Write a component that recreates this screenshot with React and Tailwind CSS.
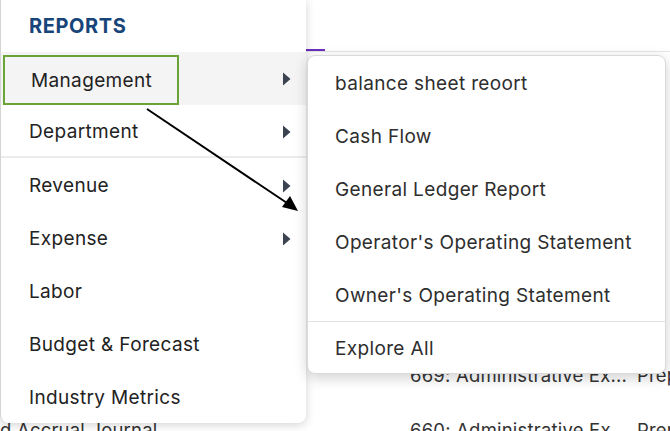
import React from 'react';

const mainItems = [
  { label: 'Management', sub: true, active: true },
  { label: 'Department', sub: true, divider: true },
  { label: 'Revenue', sub: true },
  { label: 'Expense', sub: true },
  { label: 'Labor' },
  { label: 'Budget & Forecast' },
  { label: 'Industry Metrics' },
];

const subItems = [
  'balance sheet reoort',
  'Cash Flow',
  'General Ledger Report',
  "Operator's Operating Statement",
  "Owner's Operating Statement",
];

function Caret() {
  return (
    <svg width="9" height="14" viewBox="0 0 9 14" className="shrink-0">
      <path d="M1 0.5 L8.5 7 L1 13.5 Z" fill="#3b4350" />
    </svg>
  );
}

function App() {
  return (
    <div
      className="relative w-[670px] h-[431px] overflow-hidden bg-white text-[#222] tracking-[0.35px]"
      style={{ fontFamily: 'Inter, "Noto Sans", sans-serif' }}
    >
      {/* page behind the menu */}
      <div className="flex flex-col text-[18.5px] tracking-[0.2px] text-[#333] whitespace-nowrap">
        <div className="h-[52px] flex items-end pl-[305px] border-b border-[#e5e5e5]">
          <div className="w-[20px] h-[2px] bg-[#6b2fbf]" />
        </div>
        <div className="h-[296px]" />
        <div className="h-[52px] flex items-end pb-[10px] pl-[410px]">
          <span className="w-[227px] shrink-0">669: Administrative Ex...</span>
          <span className="shrink-0">Prep</span>
        </div>
        <div className="h-[52px] flex items-start pt-[17px]">
          <span className="w-[410px] shrink-0">d Accrual Journal</span>
          <span className="w-[227px] shrink-0">660: Administrative Ex...</span>
          <span className="shrink-0">Prep</span>
        </div>
      </div>

      {/* left menu */}
      <div className="absolute left-0 top-0 w-[306px] h-[423px] bg-white border-l border-[#d4d4d4] rounded-b-[8px] shadow-[0_2px_10px_rgba(0,0,0,0.18)] flex flex-col">
        <div className="h-[52px] flex items-center pl-[28px] text-[20px] font-bold text-[#17457a] tracking-[0.6px]">
          REPORTS
        </div>
        {mainItems.map((item) => (
          <div
            key={item.label}
            className={`flex items-center h-[53px] shrink-0 pr-[15px] ${item.active ? 'bg-[#f4f4f4]' : 'pt-[3px]'} ${item.divider ? 'border-b-2 border-[#ececec]' : ''}`}
          >
            <div
              className={`flex items-center ${item.active ? 'ml-[2px] mt-[3px] w-[176px] h-[50px] pl-[26px] pt-[2px] border-2 border-[#6aa336]' : 'h-full pl-[28px]'}`}
            >
              <span className="text-[19px]">{item.label}</span>
            </div>
            <div className="flex-1" />
            {item.sub && <Caret />}
          </div>
        ))}
      </div>

      {/* submenu */}
      <div className="absolute left-[307px] top-[55px] w-[359px] bg-white border border-[#dadada] rounded-[8px] shadow-[0_4px_14px_rgba(0,0,0,0.18)] flex flex-col">
        {subItems.map((s) => (
          <div key={s} className="h-[53px] flex items-center pl-[27px] pt-[3px] text-[19px] text-[#2e2e2e] whitespace-nowrap">
            {s}
          </div>
        ))}
        <div className="h-[52px] flex items-center pl-[27px] pt-[3px] text-[19px] text-[#2e2e2e] border-t border-[#e3e3e3]">
          Explore All
        </div>
      </div>

      {/* annotation arrow */}
      <svg className="absolute left-0 top-0 pointer-events-none" width="670" height="431">
        <line x1="147" y1="109" x2="290" y2="205" stroke="#000" strokeWidth="2" />
        <path d="M298 211 L282 207 L290 196 Z" fill="#000" />
      </svg>
    </div>
  );
}

export default App;
